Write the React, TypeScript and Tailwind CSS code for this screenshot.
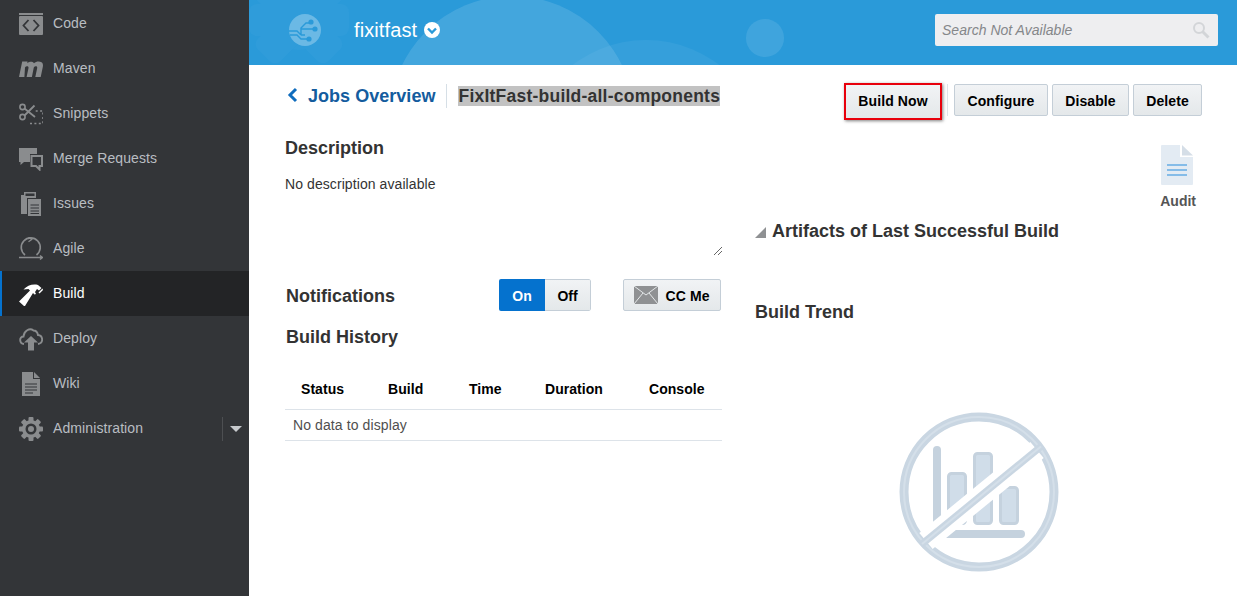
import React from "react";

const G = "#8a8c8e";

const icons: Record<string, React.ReactNode> = {
  code: (
    <svg width="24" height="24" viewBox="0 0 24 24">
      <rect x="0" y="1" width="24" height="2" fill={G} />
      <rect x="0" y="4" width="24" height="19" rx="1" fill={G} />
      <path d="M9.5 8 L4.5 13.5 L9.5 19 M14.5 8 L19.5 13.5 L14.5 19" stroke="#333538" strokeWidth="1.8" fill="none" />
    </svg>
  ),
  maven: (
    <svg width="24" height="24" viewBox="0 0 24 24">
      <path d="M0 20 L3.2 4.6 H8.5 L8.2 6.2 C10 4.4 13.5 4 15 6.2 C17 4.2 20.5 4 22.5 5.2 C24 6.2 24.2 8 23.8 10 L21.7 20 H16.3 L18.2 11 C18.5 9 15.8 8.8 14.8 10.5 L12.9 20 H7.6 L9.5 11 C9.8 9 7 8.8 6 10.5 L5.4 20 Z" fill={G} />
    </svg>
  ),
  snippets: (
    <svg width="24" height="24" viewBox="0 0 24 24">
      <circle cx="3.5" cy="5" r="2.6" stroke={G} strokeWidth="1.6" fill="none" />
      <circle cx="3.5" cy="15" r="2.6" stroke={G} strokeWidth="1.6" fill="none" />
      <path d="M5.5 6.5 L16 15 M5.5 13.5 L15.5 3.5" stroke={G} strokeWidth="1.8" />
      <path d="M11 21.5 H24 V9 H16" stroke={G} strokeWidth="1.6" strokeDasharray="2 2.4" fill="none" />
    </svg>
  ),
  merge: (
    <svg width="24" height="24" viewBox="0 0 24 24">
      <path d="M0 1 H18 V7 H11 V15 H5 L1.5 18 V15 H0 Z" fill={G} />
      <path d="M12.5 9 H23 V19 H20.5 V22.5 L17 19 H12.5 Z" stroke={G} strokeWidth="2" fill="none" />
    </svg>
  ),
  issues: (
    <svg width="24" height="24" viewBox="0 0 24 24">
      <path d="M2 3 H5 V0 H17 V6 H8 V22 H2 Z" fill={G} />
      <path d="M6.5 1.5 H15.5 V4 H6.5 Z" fill="#333538" />
      <path d="M9 7 H22 V24 H9 Z" fill={G} />
      <path d="M11.5 13 H20 M11.5 16 H20 M11.5 19 H20 M11.5 21.5 H20" stroke="#333538" strokeWidth="1" />
    </svg>
  ),
  agile: (
    <svg width="24" height="24" viewBox="0 0 24 24">
      <path d="M6 18 A 9.5 9.5 0 1 1 17.5 18" stroke={G} strokeWidth="1.7" fill="none" />
      <path d="M9.5 0 L12.8 2.4 L9.5 4.8" stroke={G} strokeWidth="1.2" fill="none" />
      <path d="M0 20.5 H23 M21 18.5 L23.5 20.5 L21 22.5" stroke={G} strokeWidth="1.5" fill="none" />
    </svg>
  ),
  build: (
    <svg width="24" height="24" viewBox="0 0 24 24">
      <path d="M0 19.5 L11 8.5 L9.5 7 L4.5 7.5 C8 3.5 14 1.5 19 3 L22.5 6 L20 8.5 L18 7 L16 10 L17 12 L15.5 12.5 L14 11 L6 24 L5 24 Z" fill="#fff" />
      <path d="M19.5 10.5 L23.5 6.5 L24 8 L20.5 11.5 Z" fill="#fff" />
    </svg>
  ),
  deploy: (
    <svg width="24" height="24" viewBox="0 0 24 24">
      <path d="M5 17 C0 16.5 0 9.5 4.5 9.5 C5 4 10.5 0.5 14.5 3.5 C16.5 3.5 18.5 5.5 19 8 C24 8.5 25 16 19 17" stroke={G} strokeWidth="1.9" fill="none" />
      <path d="M12 9 L19 15.5 H15 V23.5 H9 V15.5 H5 Z" fill={G} />
    </svg>
  ),
  wiki: (
    <svg width="24" height="24" viewBox="0 0 24 24">
      <path d="M3 0 H14 V7 H21 V24 H3 Z" fill={G} />
      <path d="M15 0 L21 6 H15 Z" fill={G} />
      <path d="M6 12 H18 M6 15 H18 M6 18 H18 M6 21 H14" stroke="#333538" strokeWidth="1" />
    </svg>
  ),
  admin: (
    <svg width="24" height="24" viewBox="0 0 24 24">
      <g fill={G}>
        <circle cx="12" cy="12" r="9" />
        <rect x="9.5" y="0" width="5" height="24" rx="1" />
        <rect x="9.5" y="0" width="5" height="24" rx="1" transform="rotate(45 12 12)" />
        <rect x="9.5" y="0" width="5" height="24" rx="1" transform="rotate(90 12 12)" />
        <rect x="9.5" y="0" width="5" height="24" rx="1" transform="rotate(135 12 12)" />
      </g>
      <circle cx="12" cy="12" r="5.5" fill="#333538" />
      <circle cx="12" cy="12" r="3" fill={G} />
    </svg>
  ),
};

const nav = [
  ["code", "Code"],
  ["maven", "Maven"],
  ["snippets", "Snippets"],
  ["merge", "Merge Requests"],
  ["issues", "Issues"],
  ["agile", "Agile"],
  ["build", "Build"],
  ["deploy", "Deploy"],
  ["wiki", "Wiki"],
  ["admin", "Administration"],
];

function Sidebar() {
  return (
    <aside className="w-[249px] shrink-0 bg-[#333538] pt-px h-[596px]">
      {nav.map(([k, label]) => {
        const active = k === "build";
        return (
          <div
            key={k}
            className={
              active
                ? "h-[45px] flex items-center pl-[17px] border-l-2 border-[#0572ce] bg-[#232426] text-white"
                : "h-[45px] flex items-center pl-[19px] text-[#b9bdc2]"
            }
          >
            <span className="w-[24px] h-[24px] block shrink-0">{icons[k]}</span>
            <span className="ml-[10px] text-[14px] tracking-[0.1px] whitespace-nowrap">{label}</span>
            {k === "admin" && (
              <div className="ml-auto flex items-center h-[24px]">
                <span className="block w-px h-[24px] bg-[#4d4f52]" />
                <span className="block ml-[7px] mr-[7px] w-0 h-0 border-l-[6px] border-r-[6px] border-t-[6px] border-l-transparent border-r-transparent border-t-[#c7cacd]" />
              </div>
            )}
          </div>
        );
      })}
    </aside>
  );
}

function Header() {
  return (
    <header className="relative h-[65px] bg-[#2a9ad9] overflow-hidden flex items-center pl-[40px] pr-[19px] pb-[5px]">
      <span className="absolute left-[141px] top-[-4px] w-[244px] h-[244px] rounded-full bg-white/12" />
      <span className="absolute left-[277px] top-[40px] w-[240px] h-[240px] rounded-full bg-white/5" />
      <span className="absolute left-[497px] top-[19px] w-[38px] h-[38px] rounded-full bg-white/10" />
      <svg className="absolute left-[0px] top-[-25px]" width="100" height="90" viewBox="0 0 100 90">
        <g fill="#2f9cda">
          <circle cx="50" cy="45" r="30" />
          <rect x="34" y="-5" width="32" height="100" rx="8" transform="rotate(45 50 45)" />
          <rect x="34" y="-5" width="32" height="100" rx="8" transform="rotate(-45 50 45)" />
          <rect x="0" y="29" width="100" height="32" rx="8" />
        </g>
      </svg>
      <svg className="relative shrink-0" width="32" height="32" viewBox="0 0 32 32">
        <circle cx="16" cy="16" r="16" fill="#6bb9e5" />
        <path d="M0 17 H8 L12 21 M1 21 H8 L12 25 H18 M12 21 H16 M12 21 L12 14 L17 9 H20 M12 15 H24" stroke="#2a9ad9" strokeWidth="1.4" fill="none" />
        <circle cx="22" cy="8" r="2.6" fill="#2a9ad9" />
        <circle cx="26" cy="15" r="2.6" fill="#2a9ad9" />
        <circle cx="20" cy="25" r="2.6" fill="#2a9ad9" />
      </svg>
      <span className="relative ml-[33px] text-white text-[20px] tracking-[0.1px] leading-[26px]">fixitfast</span>
      <svg className="relative ml-[7px] -mt-px" width="16" height="16" viewBox="0 0 16 16">
        <circle cx="8" cy="8" r="8" fill="#fff" />
        <path d="M4 6.5 L8 10.5 L12 6.5" stroke="#2a9ad9" strokeWidth="2.4" fill="none" />
      </svg>
      <div className="relative ml-auto w-[283px] h-[32px] rounded-[2px] bg-[#eeeef0] flex items-center pl-[7px] pr-[8px]">
        <span className="italic text-[14px] tracking-[0.02px] text-[#85878a]">Search Not Available</span>
        <svg className="ml-auto" width="18" height="18" viewBox="0 0 18 18">
          <circle cx="7" cy="7" r="5" stroke="#d3d5d8" strokeWidth="2" fill="none" />
          <path d="M10.5 10.5 L16.5 16.5" stroke="#d3d5d8" strokeWidth="3" />
        </svg>
      </div>
    </header>
  );
}

const btn =
  "h-[32px] rounded-[2px] border border-[#c4ced7] bg-gradient-to-b from-[#f1f3f5] to-[#e4e8ea] flex items-center justify-center pt-[2px] whitespace-nowrap font-bold text-[14px] tracking-[0.1px] text-black";

function LeftCol() {
  return (
    <div className="w-[437px] shrink-0 pt-[19px]">
      <div className="flex items-center h-[24px] whitespace-nowrap">
        <svg width="11" height="16" viewBox="0 0 11 16" className="ml-[2px] -mt-[2px]">
          <path d="M9 2 L3 8 L9 14" stroke="#0f6cbd" strokeWidth="3" fill="none" />
        </svg>
        <span className="ml-[10px] font-bold text-[18px] tracking-[0.03px] leading-[22px] text-[#145c9e]">Jobs Overview</span>
        <span className="ml-[11px] block w-px h-[24px] bg-[#d6dfe6]" />
        <span className="ml-[11px] font-bold text-[17.5px] tracking-[0.23px] leading-[20px] bg-[#c2c2c2] text-[#333]">
          FixItFast-build-all-components
        </span>
      </div>
      <h2 className="mt-[28px] font-bold text-[18px] leading-[24px] text-[#333]">Description</h2>
      <p className="mt-[14px] text-[14px] leading-[20px] tracking-[0.08px] text-[#333]">No description available</p>
      <div className="mt-[55px] h-[12px] flex justify-end">
        <svg width="8" height="8" viewBox="0 0 8 8" className="mt-[-2px]">
          <path d="M0 8 L8 0 M4 8 L8 4" stroke="#666" strokeWidth="1" />
        </svg>
      </div>
      <div className="mt-[18px] flex items-center h-[32px] pl-px">
        <h2 className="pt-[2px] font-bold text-[18px] text-[#333]">Notifications</h2>
        <div className="ml-[104px] flex h-[32px] rounded-[2px] overflow-hidden">
          <span className="w-[46px] pt-[2px] bg-[#0572ce] text-white font-bold text-[14px] flex items-center justify-center">On</span>
          <span className="w-[46px] pt-[2px] bg-gradient-to-b from-[#f1f3f5] to-[#e4e8ea] border border-l-0 border-[#c4ced7] rounded-r-[2px] font-bold text-[14px] text-black flex items-center justify-center">Off</span>
        </div>
        <div className={btn + " ml-auto w-[98px] mr-px"}>
          <svg width="24" height="18" viewBox="0 0 24 18" className="-mt-[2px]">
            <rect width="24" height="18" rx="1" fill="#8f9193" />
            <path d="M0 0 L12 9 L24 0 M0 18 L9 7 M24 18 L15 7" stroke="#e4e8ea" strokeWidth="1" fill="none" />
          </svg>
          <span className="ml-[7px]">CC Me</span>
        </div>
      </div>
      <h2 className="mt-[14px] pl-px font-bold text-[18px] leading-[24px] text-[#333]">Build History</h2>
      <div className="mt-[21px] w-[437px] h-[40px] border-b border-[#dde3e9] flex items-center font-bold text-[14px] tracking-[0.05px] text-black whitespace-nowrap">
        <span className="w-[87px] pl-[16px]">Status</span>
        <span className="w-[81px] pl-[16px]">Build</span>
        <span className="w-[76px] pl-[16px]">Time</span>
        <span className="w-[104px] pl-[16px]">Duration</span>
        <span className="pl-[16px]">Console</span>
      </div>
      <div className="w-[437px] h-[31px] border-b border-[#dde3e9] flex items-center pl-[8px] text-[14px] tracking-[0.1px] text-[#4f4f4f]">
        No data to display
      </div>
    </div>
  );
}

function NoChart() {
  return (
    <svg width="162" height="162" viewBox="0 0 162 162">
      <circle cx="81" cy="81" r="75" stroke="#c9d6e2" strokeWidth="9" fill="none" />
      <circle cx="81" cy="81" r="75" stroke="#d4dfe9" strokeWidth="2" fill="none" />
      <path d="M39 39 V110" stroke="#c5d2de" strokeWidth="8" strokeLinecap="round" />
      <rect x="50.5" y="62.5" width="17" height="50" rx="3" fill="#d0dde9" stroke="#c5d2de" strokeWidth="3" />
      <rect x="76.5" y="42.5" width="17" height="70" rx="3" fill="#d0dde9" stroke="#c5d2de" strokeWidth="3" />
      <rect x="102.5" y="76.5" width="17" height="36" rx="3" fill="#d0dde9" stroke="#c5d2de" strokeWidth="3" />
      <path d="M40 123 H123" stroke="#c5d2de" strokeWidth="8" strokeLinecap="round" />
      <path d="M28 130 L139 39" stroke="#fff" strokeWidth="21" />
      <path d="M24 133 L143 35.5" stroke="#c9d6e2" strokeWidth="7" />
      <path d="M24 133 L143 35.5" stroke="#d4dfe9" strokeWidth="2" />
    </svg>
  );
}

function RightCol() {
  return (
    <div className="ml-[33px] w-[447px] shrink-0 pt-[19px]">
      <div className="flex items-center justify-end h-[32px]">
        <div className="w-[98px] h-[37px] mt-[3px] shrink-0 border-[2px] border-[#e8000c] shadow-[1px_1px_3px_rgba(0,0,0,0.5)] flex items-center justify-center bg-gradient-to-b from-[#f1f3f5] to-[#e4e8ea] whitespace-nowrap font-bold text-[14px] tracking-[0.1px] text-black">
          Build Now
        </div>
        <span className="ml-[5px] block w-px h-[32px] bg-[#dfe4e8]" />
        <div className={btn + " ml-[6px] w-[94px]"}>Configure</div>
        <div className={btn + " ml-[4px] w-[77px]"}>Disable</div>
        <div className={btn + " ml-[4px] w-[69px]"}>Delete</div>
      </div>
      <div className="mt-[29px] flex flex-col items-end pr-[6px]">
        <svg width="32" height="40" viewBox="0 0 32 40" className="mr-[3px]">
          <path d="M0 1 a1 1 0 0 1 1-1 H19 V12 H32 V39 a1 1 0 0 1-1 1 H1 a1 1 0 0 1-1-1 Z" fill="#e3ebf3" />
          <path d="M21 0 L32 10.5 H21 Z" fill="#d5dee7" />
          <path d="M6 20 H26 M6 25 H26 M6 30 H26" stroke="#85bce8" strokeWidth="2" />
        </svg>
        <span className="mt-[6px] font-bold text-[14px] text-[#555]">Audit</span>
      </div>
      <div className="mt-[7px] flex items-center h-[24px]">
        <span className="block w-0 h-0 border-b-[11px] border-l-[11px] border-b-[#8f9193] border-l-transparent mt-[2px]" />
        <h2 className="ml-[6px] font-bold text-[18px] text-[#333] whitespace-nowrap">Artifacts of Last Successful Build</h2>
      </div>
      <h2 className="mt-[57px] font-bold text-[18px] leading-[24px] text-[#333]">Build Trend</h2>
      <div className="mt-[87px] ml-[143px]">
        <NoChart />
      </div>
    </div>
  );
}

export default function App() {
  return (
    <div className="w-[1237px] h-[596px] overflow-hidden flex bg-white font-['Liberation_Sans',Arial,sans-serif]">
      <Sidebar />
      <div className="flex-1 min-w-0 flex flex-col">
        <Header />
        <main className="flex pl-[36px] overflow-hidden">
          <LeftCol />
          <RightCol />
        </main>
      </div>
    </div>
  );
}
